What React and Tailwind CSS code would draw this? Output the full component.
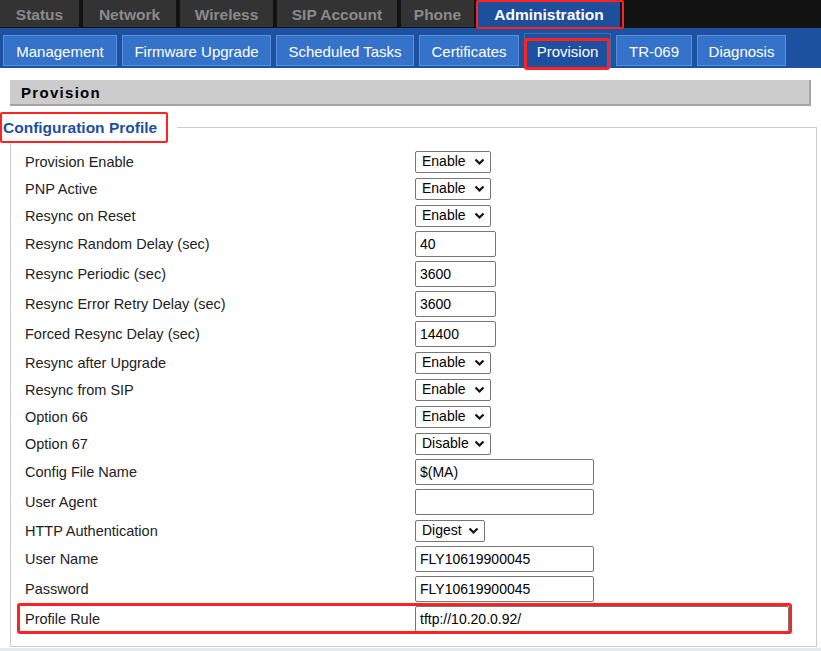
import React from 'react';

const topTabs = [
    { label: 'Status', w: 'w-[79px]' },
    { label: 'Network', w: 'w-[93px]' },
    { label: 'Wireless', w: 'w-[93px]' },
    { label: 'SIP Account', w: 'w-[120px]' },
    { label: 'Phone', w: 'w-[73px]' },
    { label: 'Administration', w: 'w-[142px]', active: true },
];

const subTabs = [
    { label: 'Management', w: 'w-[114px]' },
    { label: 'Firmware Upgrade', w: 'w-[149px]' },
    { label: 'Scheduled Tasks', w: 'w-[138px]' },
    { label: 'Certificates', w: 'w-[100px]' },
    { label: 'Provision', w: 'w-[87px]', active: true },
    { label: 'TR-069', w: 'w-[76px]' },
    { label: 'Diagnosis', w: 'w-[89px]' },
];

// type: s = select, i = input
const rows = [
    { label: 'Provision Enable', type: 's', value: 'Enable' },
    { label: 'PNP Active', type: 's', value: 'Enable' },
    { label: 'Resync on Reset', type: 's', value: 'Enable' },
    { label: 'Resync Random Delay (sec)', type: 'i', value: '40', w: 'w-[81px]' },
    { label: 'Resync Periodic (sec)', type: 'i', value: '3600', w: 'w-[81px]' },
    { label: 'Resync Error Retry Delay (sec)', type: 'i', value: '3600', w: 'w-[81px]' },
    { label: 'Forced Resync Delay (sec)', type: 'i', value: '14400', w: 'w-[81px]' },
    { label: 'Resync after Upgrade', type: 's', value: 'Enable' },
    { label: 'Resync from SIP', type: 's', value: 'Enable' },
    { label: 'Option 66', type: 's', value: 'Enable' },
    { label: 'Option 67', type: 's', value: 'Disable' },
    { label: 'Config File Name', type: 'i', value: '$(MA)', w: 'w-[179px]' },
    { label: 'User Agent', type: 'i', value: '', w: 'w-[179px]' },
    { label: 'HTTP Authentication', type: 's', value: 'Digest', w: 'w-[70px]' },
    { label: 'User Name', type: 'i', value: 'FLY10619900045', w: 'w-[179px]' },
    { label: 'Password', type: 'i', value: 'FLY10619900045', w: 'w-[179px]' },
    { label: 'Profile Rule', type: 'i', value: 'tftp://10.20.0.92/', w: 'w-[374px]' },
];

const Chevron = () => (
    <svg width="11" height="8" viewBox="0 0 11 8" className="shrink-0">
        <polyline points="1.5,1.5 5.5,5.5 9.5,1.5" fill="none" stroke="#111" strokeWidth="2.2" />
    </svg>
);

const Field = ({ row }) => {
    if (row.type === 's') {
        return (
            <div className={`flex h-[22px] ${row.w || 'w-[76px]'} items-center justify-between rounded-[2px] border border-[#767676] bg-white pl-[6px] pr-[5px] text-[14px] text-black`}>
                <span>{row.value}</span>
                <Chevron />
            </div>
        );
    }
    return (
        <div className={`flex h-[26px] ${row.w} items-center rounded-[2px] border border-[#767676] bg-white px-[4px] text-[14px] text-black`}>
            {row.value}
        </div>
    );
};

export default function App() {
    return (
        <div className="relative h-[651px] w-[821px] overflow-hidden bg-white font-['Liberation_Sans',Arial,sans-serif]">
            {/* top menu */}
            <div className="flex h-[28px] gap-[4px] bg-[#121212]">
                {topTabs.map((t) => (
                    <div
                        key={t.label}
                        className={`flex h-[27px] ${t.w} items-center justify-center pt-[3px] text-[15.5px] font-bold ${t.active ? 'bg-[#1c4f9c] text-white' : 'bg-[#333333] text-[#8a8a8a]'}`}
                    >
                        {t.label}
                    </div>
                ))}
            </div>

            {/* sub menu */}
            <div className="flex h-[40px] items-end gap-[5px] bg-[#1d52a0] pb-[2px] pl-[3px]">
                {subTabs.map((t) => (
                    <div
                        key={t.label}
                        className={`flex ${t.w} justify-center border text-[15px] text-white ${t.active ? 'mb-[-2px] h-[35px] items-start border-[#3a6cb8] bg-[#1d50a0] pt-[7px]' : 'h-[31px] items-center border-[#5b8fda] bg-[#3572c9] pt-[4px]'}`}
                    >
                        {t.label}
                    </div>
                ))}
            </div>

            {/* section title */}
            <div className="mx-[10px] mt-[12px] flex h-[26px] items-center border-b-2 border-r-2 border-[#a3a3a3] bg-[#cccccc] pl-[11px] pt-[3px] text-[15px] font-bold tracking-[1.3px] text-black">
                Provision
            </div>

            {/* fieldset */}
            <div className="mx-[10px] mt-[7px] w-[807px]">
                <div className="flex h-[28px]">
                    <div className="-ml-[7px] flex items-center pt-[2px] text-[15.5px] font-bold text-[#1d4f9e]">Configuration Profile</div>
                    <div className="ml-[20px] mt-[14px] flex-1 border-r border-t border-[#cccccc]" />
                </div>
                <div className="border-b border-l border-r border-[#cccccc] pb-[12px] pl-[14px] pt-[7px]">
                    {rows.map((row) => (
                        <div key={row.label} className={`flex items-center ${row.type === 's' ? 'h-[27px]' : 'h-[30px]'}`}>
                            <div className="w-[390px] pt-[2px] text-[14.5px] text-[#222222]">{row.label}</div>
                            <Field row={row} />
                        </div>
                    ))}
                </div>
                <div className="-mx-[10px] mt-[1px] h-[4px] bg-[#e4e9ee]" />
            </div>

            {/* annotation boxes */}
            <div className="pointer-events-none absolute left-[476px] top-0 h-[29px] w-[148px] rounded-[2px] border-2 border-[#ff2222]" />
            <div className="pointer-events-none absolute left-[524px] top-[38px] h-[32px] w-[86px] rounded-[3px] border-[3px] border-[#ff2222]" />
            <div className="pointer-events-none absolute left-0 top-[112px] h-[31px] w-[168px] rounded-[2px] border-2 border-[#ff2222]" />
            <div className="pointer-events-none absolute left-[17px] top-[603px] h-[31px] w-[775px] rounded-[3px] border-[3px] border-[#ff2222]" />
        </div>
    );
}
